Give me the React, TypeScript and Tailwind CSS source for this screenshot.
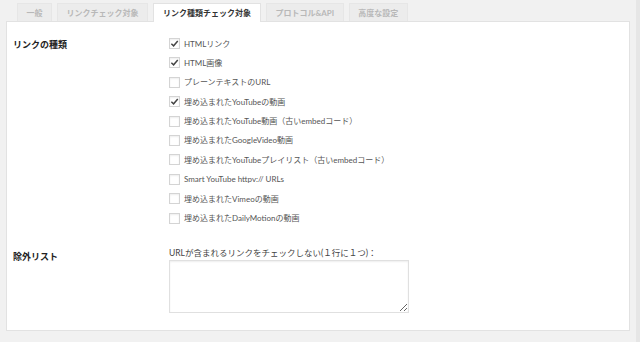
const tabs = [
  { label: "一般", active: false },
  { label: "リンクチェック対象", active: false },
  { label: "リンク種類チェック対象", active: true },
  { label: "プロトコル&API", active: false },
  { label: "高度な設定", active: false },
]

const linkTypes = [
  { label: "HTMLリンク", checked: true },
  { label: "HTML画像", checked: true },
  { label: "プレーンテキストのURL", checked: false },
  { label: "埋め込まれたYouTubeの動画", checked: true },
  { label: "埋め込まれたYouTube動画（古いembedコード）", checked: false },
  { label: "埋め込まれたGoogleVideo動画", checked: false },
  { label: "埋め込まれたYouTubeプレイリスト（古いembedコード）", checked: false },
  { label: "Smart YouTube httpv:// URLs", checked: false },
  { label: "埋め込まれたVimeoの動画", checked: false },
  { label: "埋め込まれたDailyMotionの動画", checked: false },
]

const Check = ({ checked }: { checked: boolean }) => (
  <span className="flex h-[11px] w-[11px] shrink-0 items-center justify-center border border-[#d4d4d4] bg-white shadow-[inset_0_1px_2px_rgba(0,0,0,0.07)]">
    {checked && (
      <svg width="9" height="9" viewBox="0 0 10 10">
        <path d="M1.5 5.2 L4 7.6 L8.6 2.2" fill="none" stroke="#444" strokeWidth="1.6" />
      </svg>
    )}
  </span>
)

export default function App() {
  return (
    <div
      className="h-[342px] w-[640px] overflow-hidden bg-[#f1f1f1] text-[8px] text-[#444]"
      style={{ fontFamily: '"Lato", "Noto Sans CJK JP", sans-serif' }}
    >
      <div className="flex h-full">
        <div className="flex flex-1 flex-col pl-[6px] pr-[6px]">
          {/* tabs */}
          <div className="flex h-[21px] items-end gap-[5px] pl-[11px]">
            {tabs.map((tab) => (
              <div
                key={tab.label}
                className={
                  tab.active
                    ? "relative -mb-px flex h-[19px] items-center border border-b-0 border-[#e2e2e2] bg-white px-[9px] font-bold text-[#333]"
                    : "flex h-[18px] items-center border border-b-0 border-[#e6e6e6] bg-[#ececec] px-[8.5px] font-bold text-[#b8b8b8]"
                }
              >
                {tab.label}
              </div>
            ))}
          </div>

          {/* panel */}
          <div className="h-[310px] border border-[#e2e2e2] bg-white">
            <div className="flex pt-[16px]">
              <div className="w-[162px] pl-[6px] text-[9px] font-bold text-[#222]">リンクの種類</div>
              <div className="flex flex-col gap-[8.4px]">
                {linkTypes.map((item) => (
                  <label key={item.label} className="flex h-[11px] items-center gap-[4px]">
                    <Check checked={item.checked} />
                    <span className="whitespace-nowrap text-[#555]">{item.label}</span>
                  </label>
                ))}
              </div>
            </div>

            <div className="mt-[23px] flex">
              <div className="w-[162px] pl-[6px] pt-[3px] text-[9px] font-bold text-[#222]">除外リスト</div>
              <div className="flex flex-col">
                <span className="text-[8.5px] text-[#444]">URLが含まれるリンクをチェックしない(１行に１つ)：</span>
                <textarea className="mt-[1px] h-[53px] w-[240px] resize-y border border-[#e0e0e0] bg-white shadow-[inset_0_1px_2px_rgba(0,0,0,0.07)] outline-none" />
              </div>
            </div>
          </div>
        </div>
        <div className="w-[4px] bg-[#e6e6e6]" />
      </div>
    </div>
  )
}
